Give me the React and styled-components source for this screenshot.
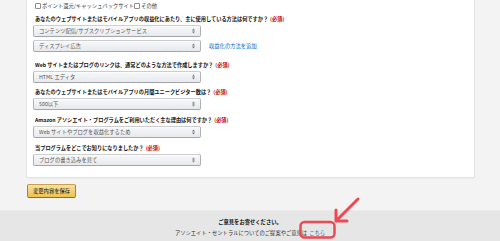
import React from 'react';
import styled, { createGlobalStyle } from 'styled-components';

const GlobalStyle = createGlobalStyle`
  html, body {
    margin: 0;
    padding: 0;
    background: #f3f3f3;
  }
  body {
    width: 500px;
    height: 241px;
    overflow: hidden;
    font-family: "Noto Sans CJK JP", "Noto Sans", sans-serif;
    color: #111;
  }
`;

const Page = styled.div`
  position: relative;
  width: 500px;
  height: 241px;
  display: flex;
  flex-direction: column;
`;

const Main = styled.div`
  flex: 1;
  padding: 0 26px 0 27px;
`;

const Panel = styled.div`
  background: #fff;
  padding: 1px 0 11px 6px;
  box-shadow: 0 0 0 1px #e4e4e4, 0 1px 2px rgba(0, 0, 0, 0.08);
`;

const CheckRow = styled.div`
  display: flex;
  align-items: center;
  height: 9px;
  padding-left: 2px;
  margin-bottom: 4px;
  font-size: 5.3px;
  color: #333;
`;

const Box = styled.span`
  width: 4px;
  height: 4px;
  border: 1px solid #8d8d8d;
  border-radius: 1px;
  background: #fff;
  margin-right: 1px;
`;

const Question = styled.div`
  margin-bottom: ${p => p.$after}px;
`;

const Label = styled.div`
  height: 9px;
  line-height: 9px;
  padding-left: 2px;
  margin-bottom: 2px;
  font-size: 5.2px;
  font-weight: 700;
  color: #111;
  white-space: nowrap;
`;

const Required = styled.span`
  color: #c40000;
  margin-left: 2px;
`;

const SelectRow = styled.div`
  display: flex;
  align-items: center;
  & + & {
    margin-top: 3px;
  }
`;

const Dropdown = styled.div`
  width: 168px;
  height: 12px;
  box-sizing: border-box;
  display: flex;
  align-items: center;
  justify-content: space-between;
  padding: 0 5px;
  border: 1px solid #adb1b8;
  border-color: #cdcdcd #adb1b8 #a2a6ac;
  border-radius: 2px;
  background: linear-gradient(to bottom, #f7f8fa, #e7e9ec);
  box-shadow: 0 1px 0 rgba(255, 255, 255, 0.6) inset;
  font-size: 5.3px;
  color: #555;
  white-space: nowrap;
`;

const Link = styled.a`
  color: #0066c0;
  text-decoration: none;
  font-size: 5.3px;
  margin-left: 8px;
`;

const SaveButton = styled.div`
  align-self: flex-start;
  margin: 7px 0 0 27px;
  height: 14px;
  box-sizing: border-box;
  display: flex;
  align-items: center;
  padding: 0 5px;
  border: 1px solid #a88734;
  border-color: #c5a24b #a88734 #8a6f2a;
  border-radius: 2px;
  background: linear-gradient(to bottom, #f7dfa5, #f0c14b);
  font-size: 5.3px;
  color: #111;
`;

const Footer = styled.div`
  margin-top: 12px;
  height: 31px;
  background: #e6e6e6;
  border-top: 1px solid #ececec;
  display: flex;
  flex-direction: column;
  align-items: center;
  padding-top: 7px;
  box-sizing: border-box;
  font-size: 5.3px;
`;

const FooterTitle = styled.div`
  font-weight: 700;
  color: #111;
  line-height: 8px;
`;

const FooterLine = styled.div`
  color: #333;
  line-height: 8px;
  margin-top: 3px;
`;

const FooterLink = styled.span`
  color: #0066c0;
  margin-left: 2px;
`;

const Overlay = styled.svg`
  position: absolute;
  left: 0;
  top: 0;
  pointer-events: none;
`;

const Caret = () => (
  <svg width="3" height="6" viewBox="0 0 3 6">
    <path d="M0 2.5 L1.5 0.5 L3 2.5 Z M0 3.5 L1.5 5.5 L3 3.5 Z" fill="#777" />
  </svg>
);

const Select = ({ children }) => (
  <Dropdown>
    <span>{children}</span>
    <Caret />
  </Dropdown>
);

const questions = [
  {
    label: 'Web サイトまたはブログのリンクは、通常どのような方法で作成しますか？',
    value: 'HTML エディタ',
    after: 4,
  },
  {
    label: 'あなたのウェブサイトまたはモバイルアプリの月間ユニークビジター数は？',
    value: '500以下',
    after: 5,
  },
  {
    label: 'Amazon アソシエイト・プログラムをご利用いただく主な理由は何ですか？',
    value: 'Web サイトやブログを収益化するため',
    after: 5,
  },
  {
    label: '当プログラムをどこでお知りになりましたか？',
    value: 'ブログの書き込みを見て',
    after: 0,
  },
];

export default function App() {
  return (
    <Page>
      <GlobalStyle />
      <Main>
        <Panel>
          <CheckRow>
            <Box />
            ポイント還元/キャッシュバックサイト
            <Box />
            その他
          </CheckRow>
          <Question $after={8}>
            <Label>
              あなたのウェブサイトまたはモバイルアプリの収益化にあたり、主に使用している方法は何ですか？
              <Required>(必須)</Required>
            </Label>
            <SelectRow>
              <Select>コンテンツ配信/サブスクリプションサービス</Select>
            </SelectRow>
            <SelectRow>
              <Select>ディスプレイ広告</Select>
              <Link>収益化の方法を追加</Link>
            </SelectRow>
          </Question>
          {questions.map((q, i) => (
            <Question key={i} $after={q.after}>
              <Label>
                {q.label}
                <Required>(必須)</Required>
              </Label>
              <SelectRow>
                <Select>{q.value}</Select>
              </SelectRow>
            </Question>
          ))}
        </Panel>
      </Main>
      <SaveButton>変更内容を保存</SaveButton>
      <Footer>
        <FooterTitle>ご意見をお寄せください。</FooterTitle>
        <FooterLine>
          アソシエイト・セントラルについてのご提案やご意見は
          <FooterLink>こちら</FooterLink>
        </FooterLine>
      </Footer>
      <Overlay width="500" height="241" viewBox="0 0 500 241">
        <rect x="300.5" y="222" width="34" height="15.5" rx="4" fill="none" stroke="#ec4a52" strokeWidth="2.5" />
        <path d="M358 199 L337 220 M336 210 L336 221 L347 221" fill="none" stroke="#ec4a52" strokeWidth="3" strokeLinecap="round" strokeLinejoin="round" />
      </Overlay>
    </Page>
  );
}
